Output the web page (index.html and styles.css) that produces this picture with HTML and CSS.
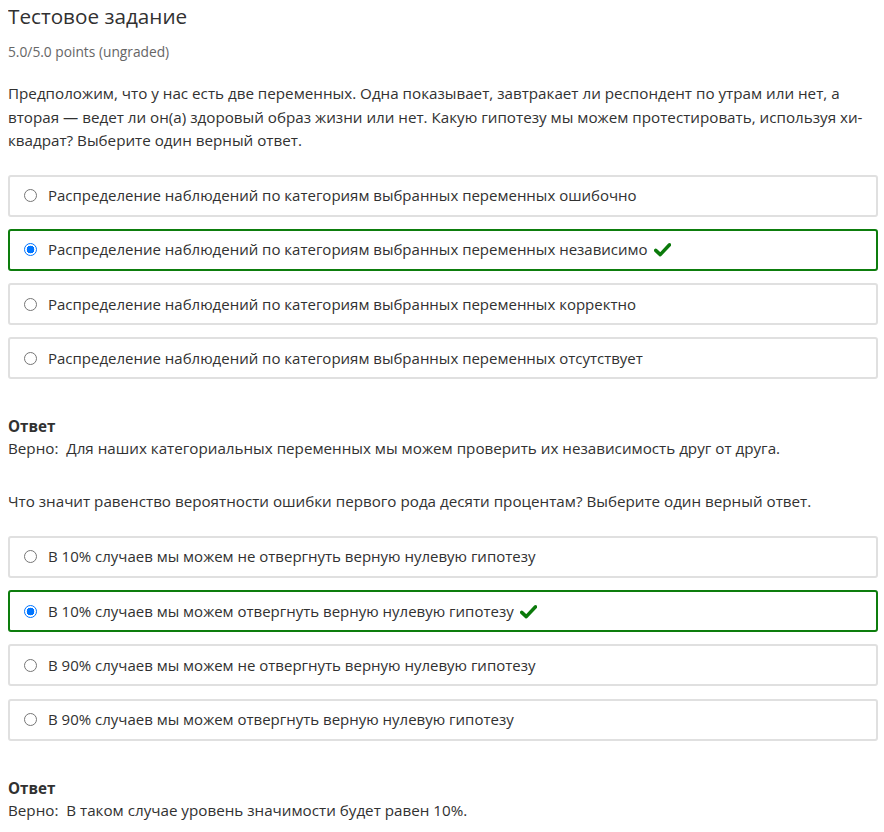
FILE: index.html
```html
<!DOCTYPE html>
<html lang="ru">
<head>
<meta charset="utf-8">
<title>Тестовое задание</title>
<link rel="stylesheet" href="styles.css">
</head>
<body>
<div class="problem">
  <h2 class="title">Тестовое задание</h2>
  <div class="points">5.0/5.0 points (ungraded)</div>

  <p class="question">Предположим, что у нас есть две переменных. Одна показывает, завтракает ли респондент по утрам или нет, а вторая — ведет ли он(а) здоровый образ жизни или нет. Какую гипотезу мы можем протестировать, используя хи-квадрат? Выберите один верный ответ.</p>

  <div class="choices">
    <label class="choice"><span class="radio"></span><span class="text">Распределение наблюдений по категориям выбранных переменных ошибочно</span></label>
    <label class="choice correct"><span class="radio checked"></span><span class="text">Распределение наблюдений по категориям выбранных переменных независимо</span><svg class="check" viewBox="0 0 16 16" width="17" height="17"><path d="M1.6 8.8 L5.9 12.8 L14.6 3.6" fill="none" stroke="#0b7a0b" stroke-width="3.3" stroke-linecap="round" stroke-linejoin="round"/></svg></label>
    <label class="choice"><span class="radio"></span><span class="text">Распределение наблюдений по категориям выбранных переменных корректно</span></label>
    <label class="choice"><span class="radio"></span><span class="text">Распределение наблюдений по категориям выбранных переменных отсутствует</span></label>
  </div>

  <div class="answer">
    <div class="answer-label">Ответ</div>
    <div class="answer-text">Верно:&nbsp; Для наших категориальных переменных мы можем проверить их независимость друг от друга.</div>
  </div>

  <p class="question q2">Что значит равенство вероятности ошибки первого рода десяти процентам? Выберите один верный ответ.</p>

  <div class="choices">
    <label class="choice"><span class="radio"></span><span class="text">В 10% случаев мы можем не отвергнуть верную нулевую гипотезу</span></label>
    <label class="choice correct"><span class="radio checked"></span><span class="text">В 10% случаев мы можем отвергнуть верную нулевую гипотезу</span><svg class="check" viewBox="0 0 16 16" width="17" height="17"><path d="M1.6 8.8 L5.9 12.8 L14.6 3.6" fill="none" stroke="#0b7a0b" stroke-width="3.3" stroke-linecap="round" stroke-linejoin="round"/></svg></label>
    <label class="choice"><span class="radio"></span><span class="text">В 90% случаев мы можем не отвергнуть верную нулевую гипотезу</span></label>
    <label class="choice"><span class="radio"></span><span class="text">В 90% случаев мы можем отвергнуть верную нулевую гипотезу</span></label>
  </div>

  <div class="answer">
    <div class="answer-label">Ответ</div>
    <div class="answer-text">Верно:&nbsp; В таком случае уровень значимости будет равен 10%.</div>
  </div>
</div>
</body>
</html>
```

FILE: styles.css
```css
html, body {
  background: #ffffff;
}
body {
  margin: 0 6px 0 8px;
  font-family: "Open Sans", "Noto Sans", sans-serif;
  color: #313131;
  font-size: 15.2px;
  line-height: 23px;
}
.title {
  margin: 0;
  padding-top: 2px;
  font-size: 20.7px;
  font-weight: 400;
  line-height: 28px;
  color: #313131;
}
.points {
  margin-top: 12px;
  font-size: 13.75px;
  line-height: 20px;
  color: #666666;
}
.question {
  margin: 20px 0 0 0;
  line-height: 23.5px;
}
.q2 {
  margin-top: 31px;
  margin-bottom: 3px;
}
.choices {
  display: flex;
  flex-direction: column;
  gap: 12.3px;
  margin-top: 22px;
}
.choice {
  display: flex;
  align-items: center;
  height: 42px;
  box-sizing: border-box;
  border: 2px solid #e0e0e0;
  border-radius: 3px;
  padding-left: 14px;
  font-size: 15px;
}
.choice.correct {
  border-color: #0d7d0d;
}
.radio {
  width: 13px;
  height: 13px;
  box-sizing: border-box;
  border: 1px solid #767676;
  border-radius: 50%;
  flex: none;
  margin-right: 11px;
  background: #fff;
}
.radio.checked {
  border: 1.5px solid #0075ff;
  background: radial-gradient(circle, #0075ff 0 3.6px, #ffffff 4.1px);
}
.text {
  white-space: nowrap;
}
.check {
  margin-left: 6px;
  flex: none;
}
.answer {
  margin-top: 36px;
}
.answer-label {
  font-weight: 700;
  line-height: 22px;
}
.answer-text {
  line-height: 22px;
}
```
